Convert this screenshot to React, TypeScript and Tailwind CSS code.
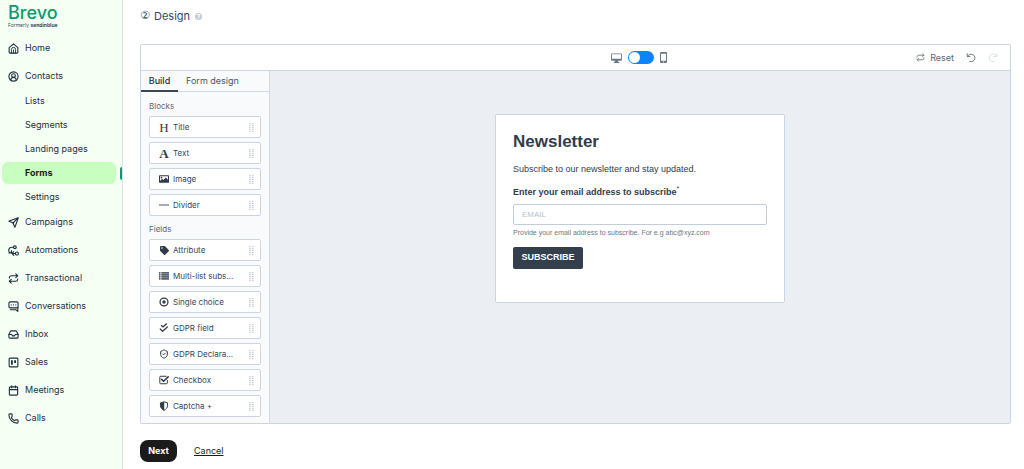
import React from "react";
import {
  Calendar,
  CircleUserRound,
  Inbox,
  Phone,
  Repeat,
  Send,
  ShieldCheck,
} from "lucide-react";
import { FaTag } from "react-icons/fa";

const stroke = {
  fill: "none",
  stroke: "currentColor",
  strokeWidth: 2.4,
  strokeLinecap: "round" as const,
  strokeLinejoin: "round" as const,
};

function HomeIcon() {
  return (
    <svg viewBox="0 0 24 24" className="size-[11px]" {...stroke}>
      <path d="M2.500 10 12 2l9.500 8v10a2 2 0 0 1-2 2h-15a2 2 0 0 1-2-2z" />
      <path d="M7.500 22v-8a4.500 4.500 0 0 1 9 0v8M12 15v7" strokeWidth="2" />
    </svg>
  );
}

function AutomationIcon() {
  return (
    <svg viewBox="0 0 24 24" className="size-[11px]" {...stroke}>
      <circle cx="15" cy="5" r="3" />
      <circle cx="19.500" cy="18.500" r="3.300" />
      <path d="M12 5H8a6.500 6.500 0 0 0-4 11.500M7.500 12v5.200H2M16 18.500h-5M12.500 14.500l-4 4 4 4" />
    </svg>
  );
}

function ChatIcon() {
  return (
    <svg viewBox="0 0 24 24" className="size-[11px]" {...stroke}>
      <path d="M5 2h14a3 3 0 0 1 3 3v7a3 3 0 0 1-3 3H5a3 3 0 0 1-3-3V5a3 3 0 0 1 3-3z" />
      <path d="M7 8.500h.1M12 8.500h.1M17 8.500h.1" />
      <path d="M5 19h12l4.500 3.500V14" />
    </svg>
  );
}

function BoardIcon() {
  return (
    <svg viewBox="0 0 24 24" className="size-[11px]" {...stroke}>
      <rect x="2.500" y="2.500" width="19" height="19" rx="2" />
      <path d="M8.500 7v10M15.500 7v6" strokeWidth="4" strokeLinecap="butt" />
    </svg>
  );
}

function ImageIcon() {
  return (
    <svg viewBox="0 0 24 24" className="size-[10px]">
      <path
        fill="currentColor"
        fillRule="evenodd"
        d="M2 3h20a2 2 0 0 1 2 2v14a2 2 0 0 1-2 2H2a2 2 0 0 1-2-2V5a2 2 0 0 1 2-2zm.5 2.500v11l5-5 3 3 6-6 5 5V5.500zM6 6.500a2 2 0 1 1 0 4 2 2 0 0 1 0-4z"
      />
    </svg>
  );
}

function DividerIcon() {
  return (
    <svg viewBox="0 0 24 24" className="size-[10px]">
      <path d="M0 12h24" stroke="currentColor" strokeWidth="2" />
    </svg>
  );
}

function ListIcon() {
  return (
    <svg viewBox="0 0 10 10" className="size-[10px]" fill="currentColor">
      {[1, 3, 5, 7].map((y) => (
        <React.Fragment key={y}>
          <rect x="0" y={y + 0.2} width="1.500" height="1.400" />
          <rect x="2.300" y={y + 0.2} width="7.700" height="1.400" />
        </React.Fragment>
      ))}
    </svg>
  );
}

function RadioIcon() {
  return (
    <svg viewBox="0 0 24 24" className="size-[10px]">
      <circle cx="12" cy="12" r="9.500" fill="none" stroke="currentColor" strokeWidth="3" />
      <circle cx="12" cy="12" r="4" fill="currentColor" />
    </svg>
  );
}

function DoubleCheckIcon() {
  return (
    <svg viewBox="0 0 24 24" className="size-[10px]" {...stroke}>
      <path d="M6 6l3.500 3.500L18 2M3 14.500l5.500 5.500L20 9.500" strokeWidth="3" />
    </svg>
  );
}

function CheckboxIcon() {
  return (
    <svg viewBox="0 0 24 24" className="size-[10px]" {...stroke}>
      <path d="M20 13v6a2 2 0 0 1-2 2H4a2 2 0 0 1-2-2V5a2 2 0 0 1 2-2h13" />
      <path d="M6.500 10.500 11 15 22 4.500" strokeWidth="3.800" />
    </svg>
  );
}

function HalfShieldIcon() {
  return (
    <svg viewBox="0 0 24 24" className="size-[10px]">
      <path
        d="M12 2 20.500 4.500V11c0 5-3.500 9-8.500 11.500C7 20 3.500 16 3.500 11V4.500z"
        fill="none"
        stroke="currentColor"
        strokeWidth="2.400"
        strokeLinejoin="round"
      />
      <path d="M12.500 2 3.500 4.500V11c0 5 3.500 9 9 11.500z" fill="currentColor" />
    </svg>
  );
}

function UndoIcon({ className = "" }: { className?: string }) {
  return (
    <svg viewBox="0 0 24 24" className={`size-[10px] ${className}`} {...stroke}>
      <path d="M3 2v6.500h6.500" />
      <path d="M3.500 8.500C6 4.500 9 3 12.500 3a9 9 0 1 1-3.500 17.300" />
    </svg>
  );
}

function DesktopIcon() {
  return (
    <svg viewBox="0 0 24 22" className="h-[10px] w-[11px]">
      <path
        fill="currentColor"
        fillRule="evenodd"
        d="M2 1h20a2 2 0 0 1 2 2v12a2 2 0 0 1-2 2H2a2 2 0 0 1-2-2V3a2 2 0 0 1 2-2zm0 2v9.500h20V3zm7 14h6l1 3h2v2H6v-2h2z"
      />
    </svg>
  );
}

function MobileIcon() {
  return (
    <svg viewBox="0 0 14 22" className="h-[11px] w-[7px]">
      <path
        fill="currentColor"
        fillRule="evenodd"
        d="M2 0h10a2 2 0 0 1 2 2v18a2 2 0 0 1-2 2H2a2 2 0 0 1-2-2V2a2 2 0 0 1 2-2zm0 3.500v14h10v-14zM7 18.500a1.200 1.200 0 1 0 0 2.400 1.200 1.200 0 0 0 0-2.400z"
      />
    </svg>
  );
}

function Grip() {
  return (
    <svg viewBox="0 0 5 9" className="h-[9px] w-[5px] text-[#c3ced8]" fill="currentColor">
      {[0, 2, 4, 6, 8].map((y) => (
        <React.Fragment key={y}>
          <rect x="0" y={y} width="1.600" height="1.200" />
          <rect x="3" y={y} width="1.600" height="1.200" />
        </React.Fragment>
      ))}
    </svg>
  );
}

type Item = { label: string; icon: React.ReactNode };

const contactLinks = ["Lists", "Segments", "Landing pages", "Forms", "Settings"];

const topLinks: Item[] = [
  { label: "Home", icon: <HomeIcon /> },
  { label: "Contacts", icon: <CircleUserRound size={11} strokeWidth={2.4} /> },
];

const mainLinks: Item[] = [
  { label: "Campaigns", icon: <Send size={11} strokeWidth={2.4} /> },
  { label: "Automations", icon: <AutomationIcon /> },
  { label: "Transactional", icon: <Repeat size={11} strokeWidth={2.4} /> },
  { label: "Conversations", icon: <ChatIcon /> },
  { label: "Inbox", icon: <Inbox size={11} strokeWidth={2.4} /> },
  { label: "Sales", icon: <BoardIcon /> },
  { label: "Meetings", icon: <Calendar size={11} strokeWidth={2.4} /> },
  { label: "Calls", icon: <Phone size={11} strokeWidth={2.4} /> },
];

const blocks: Item[] = [
  {
    label: "Title",
    icon: (
      <span aria-hidden="true" className="font-['Liberation_Serif',serif] text-[13px] leading-none">
        H
      </span>
    ),
  },
  {
    label: "Text",
    icon: (
      <span aria-hidden="true" className="font-['Liberation_Serif',serif] text-[13px] leading-none font-bold">
        A
      </span>
    ),
  },
  { label: "Image", icon: <ImageIcon /> },
  { label: "Divider", icon: <DividerIcon /> },
];

const fields: Item[] = [
  { label: "Attribute", icon: <FaTag size={9} /> },
  { label: "Multi-list subs...", icon: <ListIcon /> },
  { label: "Single choice", icon: <RadioIcon /> },
  { label: "GDPR field", icon: <DoubleCheckIcon /> },
  { label: "GDPR Declara...", icon: <ShieldCheck size={10} strokeWidth={2.4} /> },
  { label: "Checkbox", icon: <CheckboxIcon /> },
  { label: "Captcha +", icon: <HalfShieldIcon /> },
];

function NavLink({ label, icon }: Item) {
  return (
    <a href="#" className="flex h-7 items-center gap-[6px] pl-2">
      <span className="flex w-[11px] justify-center">{icon}</span>
      {label}
    </a>
  );
}

function BlockList({ title, items }: { title: string; items: Item[] }) {
  return (
    <section>
      <h3 className="text-[8px] leading-3 text-[#5a6872]">{title}</h3>
      <ul className="mt-1 flex flex-col gap-1">
        {items.map((item) => (
          <li key={item.label}>
            <button
              type="button"
              className="flex h-[22px] w-full items-center rounded-[2px] border border-[#cbd5e1] bg-white pr-[6px] pl-2 text-[8px] text-[#33475b]"
            >
              <span className="mr-[3px] flex w-3 justify-center text-[#2f3b48]">{item.icon}</span>
              <span className="flex-1 text-left">{item.label}</span>
              <Grip />
            </button>
          </li>
        ))}
      </ul>
    </section>
  );
}

function Sidebar() {
  return (
    <aside className="w-[123px] shrink-0 border-r border-[#d9e4e6] bg-[#f6fff3] text-[9px] text-[#1f2d3d]">
      <div className="flex h-[34px] flex-col pt-[5px] pl-2">
        <span className="text-[18px] leading-4 font-medium text-[#0b996e]">Brevo</span>
        <span className="mt-px text-[5px] leading-[6px] text-[#3b4a54]">
          Formerly <b className="font-bold">sendinblue</b>
        </span>
      </div>
      <nav>
        {topLinks.map((l) => (
          <NavLink key={l.label} {...l} />
        ))}
        <ul className="flex flex-col gap-[2px]">
          {contactLinks.map((label) => {
            const active = label === "Forms";
            return (
              <li key={label} className="flex items-center justify-between pl-[2px]">
                <a
                  href="#"
                  aria-current={active ? "page" : undefined}
                  className={
                    active
                      ? "flex h-[22px] w-[114px] items-center rounded-md bg-[#c8ffc0] pl-[23px] font-bold text-[#1b1b1b]"
                      : "flex h-[22px] w-[114px] items-center pl-[23px]"
                  }
                >
                  {label}
                </a>
                {active && <span className="h-[13px] w-[2px] rounded-l-sm bg-[#0b996e]" />}
              </li>
            );
          })}
        </ul>
        {mainLinks.map((l) => (
          <NavLink key={l.label} {...l} />
        ))}
      </nav>
    </aside>
  );
}

function Toolbar() {
  return (
    <div className="flex h-[26px] items-center border-b border-[#cfd9e3] bg-white text-[#6b7985]">
      <div className="w-[126px] shrink-0" />
      <div className="grid flex-1 grid-cols-[1fr_auto_1fr] items-center">
        <span />
        <label className="flex items-center gap-[6px]">
          <DesktopIcon />
          <input type="checkbox" role="switch" aria-label="Mobile preview" className="peer sr-only" />
          <span className="flex h-[13px] w-[26px] items-center rounded-full bg-[#0a84ff] px-px peer-checked:justify-end">
            <span className="size-[11px] rounded-full bg-white" />
          </span>
          <MobileIcon />
        </label>
        <div className="flex items-center justify-end gap-3 pr-3">
          <button type="button" className="flex items-center gap-[5px] text-[9px] text-[#5a6872]">
            <Repeat size={9} />
            Reset
          </button>
          <button type="button" aria-label="Undo">
            <UndoIcon />
          </button>
          <button type="button" aria-label="Redo" disabled className="text-[#d5dfe2]">
            <UndoIcon className="-scale-x-100" />
          </button>
        </div>
      </div>
    </div>
  );
}

function FormPreview() {
  return (
    <form
      className="mt-[43px] w-[290px] rounded-[2px] border border-[#cbd5e1] bg-white px-[17px] pt-[17px] pb-[33px] font-['Liberation_Sans',Arial,sans-serif] text-[#2f3d4c]"
      onSubmit={(e) => e.preventDefault()}
    >
      <h2 className="text-[17px] leading-5 font-bold">Newsletter</h2>
      <p className="mt-[11px] text-[9px] leading-3">Subscribe to our newsletter and stay updated.</p>
      <label htmlFor="email" className="mt-[11px] block text-[9px] leading-3 font-bold">
        Enter your email address to subscribe
        <span className="align-top text-[7px] leading-[6px] font-normal">*</span>
      </label>
      <input
        id="email"
        type="email"
        placeholder="EMAIL"
        className="mt-[6px] block h-[21px] w-full rounded-[2px] border border-[#c0ccda] px-2 text-[8px] placeholder:text-[#b5c3d0]"
      />
      <p className="mt-[3px] text-[7px] leading-[10px] text-[#6b7985]">
        Provide your email address to subscribe. For e.g abc@xyz.com
      </p>
      <button
        type="submit"
        className="mt-[9px] h-[22px] w-[70px] rounded-[2px] bg-[#343f4d] text-[9px] font-bold text-white"
      >
        SUBSCRIBE
      </button>
    </form>
  );
}

export default function App() {
  return (
    <div className="flex min-h-screen bg-white font-['Inter',sans-serif]">
      <Sidebar />
      <main className="min-w-0 flex-1 pt-2 pr-[13px] pl-[17px]">
        <h1 className="flex h-4 items-center gap-[5px] text-[11px] text-[#33475b]">
          <span className="w-[9px] font-['DejaVu_Sans',sans-serif] text-[11px]">②</span>
          Design
          <span className="flex size-[7px] items-center justify-center rounded-full bg-[#c3cdd3] text-[6px] font-bold text-white">
            ?
          </span>
        </h1>
        <div className="mt-5 overflow-hidden rounded-[2px] border border-[#cbd5e1]">
          <Toolbar />
          <div className="flex">
            <div className="w-[129px] shrink-0 border-r border-[#cfd9e3] bg-[#f9fafc]">
              <div role="tablist" className="flex h-[21px] border-b border-[#cfd9e3] text-[9px] text-[#4a5865]">
                <button
                  role="tab"
                  aria-selected="true"
                  className="-mb-px w-[37px] border-b-2 border-[#3b4652] font-medium text-[#1f2d3d]"
                >
                  Build
                </button>
                <button role="tab" aria-selected="false" className="pl-2">
                  Form design
                </button>
              </div>
              <div className="flex flex-col gap-[7px] px-2 pt-2 pb-[6px]">
                <BlockList title="Blocks" items={blocks} />
                <BlockList title="Fields" items={fields} />
              </div>
            </div>
            <div className="flex flex-1 items-start justify-center bg-[#ebeef3]">
              <FormPreview />
            </div>
          </div>
        </div>
        <div className="mt-4 flex items-center gap-[17px] text-[9px]">
          <button type="button" className="h-[22px] w-[37px] rounded-lg bg-[#1b1b1b] font-bold text-white">
            Next
          </button>
          <a href="#" className="text-[#1b1b1b] underline underline-offset-1">
            Cancel
          </a>
        </div>
      </main>
    </div>
  );
}
